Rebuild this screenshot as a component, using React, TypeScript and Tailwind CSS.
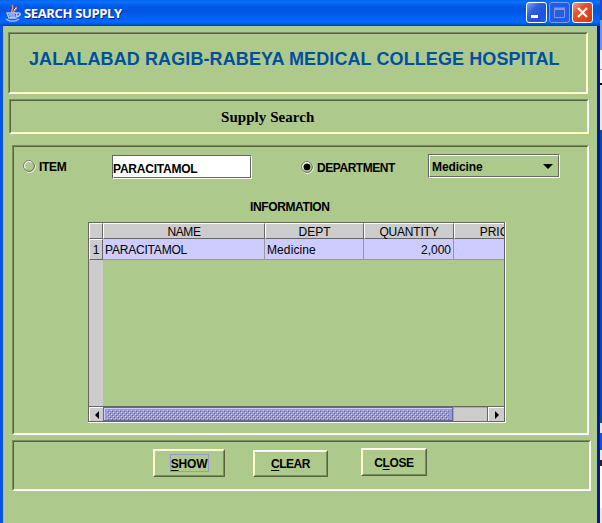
import type { ReactNode } from "react";

function Sunken({ className, children }: { className: string; children?: ReactNode }) {
  return (
    <div className={"border border-t-[#7a8d61] border-l-[#7a8d61] border-r-white border-b-white " + className}>
      <div className="flex h-full w-full border border-t-[#57653f] border-l-[#57653f] border-r-[#fdfdc9] border-b-[#fdfdc9]">
        {children}
      </div>
    </div>
  );
}

function RaisedButton({ className, children }: { className: string; children: ReactNode }) {
  return (
    <button className={"block shrink-0 border border-t-white border-l-white border-r-[#57653f] border-b-[#57653f] text-[12px] leading-[15px] font-bold " + className}>
      <span className="flex h-full w-full items-center justify-center border border-t-[#fdfdc9] border-l-[#fdfdc9] border-r-[#7a8d61] border-b-[#7a8d61]">
        {children}
      </span>
    </button>
  );
}

function HeaderCell({ className, children }: { className: string; children?: ReactNode }) {
  return (
    <div className={"h-[16px] shrink-0 border border-t-white border-l-white border-r-[#666] border-b-[#666] bg-[#ccc] text-center leading-[16px] whitespace-nowrap " + className}>
      {children}
    </div>
  );
}

function JavaCup() {
  return (
    <svg width="17" height="18" viewBox="0 0 17 18" fill="none" className="shrink-0">
      <path d="M8 10C4 7 10 5 7 1M9 9c-2-3 4-3 2-6" stroke="#f08a65" strokeWidth="1.5" />
      <path d="M9 6l2-2" stroke="#fff" />
      <path d="M2 9h10l-1 5H4zM12 9c5-1 4 3-1 4" stroke="#b9c4ee" strokeWidth="1.4" fill="#3554b4" />
      <path d="M4 11h6M5 13h5" stroke="#eef" />
      <path d="M1 15c3 3 10 3 13 0" stroke="#aeb5dc" strokeWidth="1.5" />
    </svg>
  );
}

function TitleBar() {
  const btn = "flex h-[21px] w-[21px] items-center justify-center rounded-[3px] border ";
  return (
    <div className="flex h-[26px] shrink-0 items-start bg-[linear-gradient(#0a62e8_0%,#0872ff_8%,#0058e6_25%,#0055e0_45%,#0062fa_70%,#0068ff_84%,#0050dc_94%,#003cc0_100%)] pt-[2px] pr-[7px] pl-[5px]">
      <div className="mt-[2px] flex w-[19px]"><JavaCup /></div>
      <div className="mt-[2px] grow font-['Open_Sans','Noto_Sans',sans-serif] text-[13px] leading-[18px] font-bold tracking-[-0.35px] whitespace-nowrap text-white [text-shadow:1px_1px_0_#0a2a85]">
        SEARCH SUPPLY
      </div>
      <div className="flex gap-[2px]">
        <div className={btn + "border-white bg-[linear-gradient(135deg,#7ea4fb,#2b60e2_35%,#1c50d8_70%,#1b62f4)]"}>
          <svg width="19" height="19"><path d="M4 12h7v3H4z" fill="#fff" /></svg>
        </div>
        <div className={btn + "border-[#7b9cf0] bg-[#265cdf]"}>
          <svg width="19" height="19" fill="none"><path d="M4.5 5.5h10v9h-10zM4 5h11M4 6.5h11" stroke="#7d9bee" /></svg>
        </div>
        <div className={btn + "border-white bg-[linear-gradient(135deg,#f0a088,#e0542e_35%,#d8431a_75%,#c83a12)]"}>
          <svg width="19" height="19"><path d="M5 5l9 9M14 5l-9 9" stroke="#fff" strokeWidth="2.2" /></svg>
        </div>
      </div>
    </div>
  );
}

function Radio({ checked }: { checked?: boolean }) {
  return (
    <svg width="13" height="13" viewBox="0 0 13 13" fill="none" className="block shrink-0">
      <circle cx="6.6" cy="6.6" r="5.7" stroke="#fff" />
      <circle cx="6" cy="6" r="5.4" stroke="#666" />
      <path d="M2.4 8.5A4.4 4.4 0 0 1 8.5 2.3" stroke="#fff" />
      {checked && <circle cx="6" cy="6" r="3.3" fill="#000" />}
    </svg>
  );
}

function SupplyTable() {
  return (
    <div className="mt-[7px] ml-[74px] h-[201px] w-[418px] border-r border-b border-white text-[12px]">
      <div className="flex h-[200px] w-[417px] flex-col overflow-hidden border border-[#666]">
        <div className="flex h-[16px] shrink-0 overflow-hidden">
          <HeaderCell className="w-[14px]" />
          <HeaderCell className="w-[162px]"><span className="tracking-[-0.4px]">NAME</span></HeaderCell>
          <HeaderCell className="w-[99px]">DEPT</HeaderCell>
          <HeaderCell className="w-[90px]"><span className="tracking-[-0.2px]">QUANTITY</span></HeaderCell>
          <HeaderCell className="w-[90px]"><span className="pr-[2px]">PRICE</span></HeaderCell>
        </div>
        <div className="flex h-[167px] shrink-0">
          <div className="w-[14px] shrink-0 bg-[#ccc]">
            <div className="h-[21px] w-[14px] border border-t-white border-l-white border-r-[#666] border-b-[#666] text-center leading-[21px]">1</div>
          </div>
          <div className="flex h-[21px] grow border-b border-[#999] bg-[#ccf] leading-[23px]">
            <div className="w-[162px] shrink-0 border-r border-[#999] pl-[2px] tracking-[-0.2px]">PARACITAMOL</div>
            <div className="w-[99px] shrink-0 border-r border-[#999] pl-[2px] tracking-[0.1px]">Medicine</div>
            <div className="w-[90px] shrink-0 border-r border-[#999] pr-[2px] text-right">2,000</div>
          </div>
        </div>
        <div className="flex h-[15px] shrink-0 border-t border-[#666] bg-[#ccc]">
          <div className="flex w-[14px] shrink-0 items-center justify-center border-t border-l border-white">
            <svg width="4" height="8"><path d="M4 0v8L0 4z" /></svg>
          </div>
          <div className="h-[14px] w-[350px] shrink-0 border border-[#669] bg-[#99c] p-px shadow-[inset_1px_1px_0_#ccf]">
            <svg width="344" height="10" className="mt-px ml-[2px] block">
              <defs>
                <pattern id="bumps" width="4" height="4" patternUnits="userSpaceOnUse">
                  <path d="M0 0h1v1H0zM2 2h1v1H2z" fill="#ccf" />
                  <path d="M1 1h1v1H1zM3 3h1v1H3z" fill="#669" />
                </pattern>
              </defs>
              <rect width="342" height="10" fill="url(#bumps)" />
            </svg>
          </div>
          <div className="w-[35px] shrink-0 border-t border-l border-[#aaa]" />
          <div className="flex grow items-center justify-center border-t border-l border-white shadow-[-1px_0_0_#666]">
            <svg width="4" height="8"><path d="M0 0v8L4 4z" /></svg>
          </div>
        </div>
      </div>
    </div>
  );
}

export default function App() {
  return (
    <div className="flex h-[523px] w-[602px] overflow-hidden bg-[#adc98c] font-['Liberation_Sans',sans-serif] text-black">
      <div className="flex w-[600px] shrink-0 flex-col">
        <TitleBar />
        <div className="flex grow flex-col border-r-3 border-l-3 border-r-[#0019a5] border-l-[#0753e5]">
          <Sunken className="mt-[6px] ml-[5px] h-[62px] w-[580px]">
            <h1 className="pt-[14px] pl-[19px] text-[18px] leading-[22px] font-bold tracking-[0.1px] whitespace-nowrap text-[#00509f]">
              JALALABAD RAGIB-RABEYA MEDICAL COLLEGE HOSPITAL
            </h1>
          </Sunken>
          <Sunken className="mt-[5px] ml-[6px] h-[35px] w-[580px]">
            <h2 className="pt-[6px] pl-[210px] font-['Liberation_Serif',serif] text-[15px] leading-[20px] font-bold tracking-[0.05px] whitespace-nowrap">
              Supply Search
            </h2>
          </Sunken>
          <Sunken className="mt-[11px] ml-[9px] h-[290px] w-[577px]">
            <div className="flex w-full flex-col">
              <div className="flex h-[52px] pt-[8px] text-[12px] leading-[15px] font-bold">
                <div className="flex w-[98px] gap-[3px] pt-[5px] pl-[9px]">
                  <Radio />
                  <span className="tracking-[-0.3px]">ITEM</span>
                </div>
                <div className="h-[24px] w-[140px] border border-t-[#666] border-l-[#666] border-r-white border-b-white">
                  <div className="h-full border border-t-white border-l-white border-r-[#666] border-b-[#666] bg-white leading-[24px] tracking-[-0.22px]"><span className="-ml-px">PARACITAMOL</span></div>
                </div>
                <div className="ml-[49px] flex w-[127px] gap-[3px] pt-[6px]">
                  <Radio checked />
                  <span className="tracking-[-0.45px]">DEPARTMENT</span>
                </div>
                <div className="-mt-px h-[24px] w-[132px] border border-t-[#666] border-l-[#666] border-r-white border-b-white">
                  <div className="flex h-full items-center justify-between border border-t-white border-l-white border-r-[#666] border-b-[#666] pr-[5px] pl-[2px]">
                    <span className="pt-[2px] tracking-[-0.1px]">Medicine</span>
                    <svg width="10" height="5"><path d="M0 0h10L5 5z" /></svg>
                  </div>
                </div>
              </div>
              <div className="pl-[236px] text-[12px] leading-[16px] font-bold tracking-[-0.38px]">INFORMATION</div>
              <SupplyTable />
            </div>
          </Sunken>
          <Sunken className="mt-[5px] ml-[9px] h-[51px] w-[579px]">
            <div className="flex items-start pt-[6px] pl-[139px]">
              <RaisedButton className="mt-px h-[28px] w-[72px]">
                <span className="h-[18px] w-[39px] border border-[#99c] leading-[18px] tracking-[-0.2px]"><u className="underline-offset-2">S</u>HOW</span>
              </RaisedButton>
              <RaisedButton className="mt-[2px] ml-[28px] h-[27px] w-[75px]">
                <span className="pt-[2px] tracking-[-0.5px]"><u className="underline-offset-2">C</u>LEAR</span>
              </RaisedButton>
              <RaisedButton className="ml-[33px] h-[28px] w-[66px]">
                <span className="pt-[2px] tracking-[-0.4px]">C<u className="underline-offset-2">L</u>OSE</span>
              </RaisedButton>
            </div>
          </Sunken>
        </div>
      </div>
      <div className="flex w-[2px] shrink-0 flex-col">
        <div className="h-[20px] bg-[#1c4fc4]" />
        <div className="h-[30px] bg-[#7393dc]" />
        <div className="h-[19px] bg-[#f4f2e8]" />
        <div className="h-px bg-[#999]" />
        <div className="h-[13px] bg-white" />
        <div className="h-[2px] bg-black" />
        <div className="h-[45px] bg-[#ece9d8]" />
        <div className="h-[293px] bg-[#00509f]" />
        <div className="h-[10px] bg-[#ece9d8]" />
        <div className="h-[17px] bg-[#0b55dd]" />
        <div className="h-[10px] bg-[#ece9d8]" />
        <div className="h-[6px] bg-[#222]" />
        <div className="h-[42px] bg-white" />
        <div className="h-[15px] bg-[#ece9d8]" />
      </div>
    </div>
  );
}
